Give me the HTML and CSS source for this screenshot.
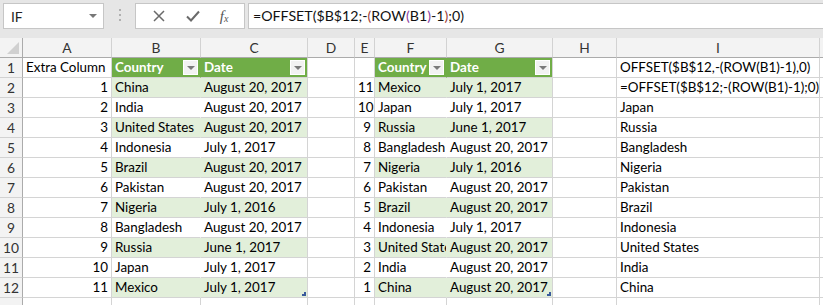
FILE: index.html
```html
<!DOCTYPE html>
<html>
<head>
<meta charset="utf-8">
<link rel="stylesheet" href="styles.css">
</head>
<body>
<div class="fbar">
  <div class="namebox"><span class="nb-text">IF</span><span class="nb-arrow"></span></div>
  <div class="grip"><i></i><i></i><i></i></div>
  <div class="iconbox">
    <svg class="ic" width="14" height="14" viewBox="0 0 14 14"><path d="M2 2L12 12M12 2L2 12" stroke="#6a6a6a" stroke-width="1.5" fill="none"/></svg>
    <svg class="ic" width="16" height="14" viewBox="0 0 16 14"><path d="M2 7.5L6 11.5L14 2.5" stroke="#6a6a6a" stroke-width="2" fill="none"/></svg>
    <span class="fx">f<sub>x</sub></span>
  </div>
  <div class="formula">=OFFSET($B$12;-<span class="p2">(</span>ROW<span class="p3">(</span>B1<span class="p3">)</span>-1<span class="p2">)</span>;0)</div>
</div>
<div class="sheet">
  <div class="corner"><span class="tri"></span></div>
  <div class="ch">A</div><div class="ch">B</div><div class="ch">C</div><div class="ch">D</div><div class="ch">E</div><div class="ch">F</div><div class="ch">G</div><div class="ch">H</div><div class="ch">I</div><div class="ch"></div>

  <div class="rh">1</div>
  <div class="c">Extra Column</div>
  <div class="c th">Country<span class="dd"></span></div>
  <div class="c th thl">Date<span class="dd"></span></div>
  <div class="c"></div><div class="c"></div>
  <div class="c th">Country<span class="dd"></span></div>
  <div class="c th thl">Date<span class="dd"></span></div>
  <div class="c"></div>
  <div class="c">OFFSET($B$12,-(ROW(B1)-1),0)</div><div class="c"></div>

  <div class="rh">2</div>
  <div class="c r">1</div><div class="c g">China</div><div class="c g end">August 20, 2017</div>
  <div class="c"></div><div class="c r">11</div><div class="c g">Mexico</div><div class="c g end">July 1, 2017</div>
  <div class="c"></div><div class="c">=OFFSET($B$12;-(ROW(B1)-1);0)</div><div class="c"></div>

  <div class="rh">3</div>
  <div class="c r">2</div><div class="c w">India</div><div class="c w end">August 20, 2017</div>
  <div class="c"></div><div class="c r">10</div><div class="c w">Japan</div><div class="c w end">July 1, 2017</div>
  <div class="c"></div><div class="c">Japan</div><div class="c"></div>

  <div class="rh">4</div>
  <div class="c r">3</div><div class="c g">United States</div><div class="c g end">August 20, 2017</div>
  <div class="c"></div><div class="c r">9</div><div class="c g">Russia</div><div class="c g end">June 1, 2017</div>
  <div class="c"></div><div class="c">Russia</div><div class="c"></div>

  <div class="rh">5</div>
  <div class="c r">4</div><div class="c w">Indonesia</div><div class="c w end">July 1, 2017</div>
  <div class="c"></div><div class="c r">8</div><div class="c w">Bangladesh</div><div class="c w end">August 20, 2017</div>
  <div class="c"></div><div class="c">Bangladesh</div><div class="c"></div>

  <div class="rh">6</div>
  <div class="c r">5</div><div class="c g">Brazil</div><div class="c g end">August 20, 2017</div>
  <div class="c"></div><div class="c r">7</div><div class="c g">Nigeria</div><div class="c g end">July 1, 2016</div>
  <div class="c"></div><div class="c">Nigeria</div><div class="c"></div>

  <div class="rh">7</div>
  <div class="c r">6</div><div class="c w">Pakistan</div><div class="c w end">August 20, 2017</div>
  <div class="c"></div><div class="c r">6</div><div class="c w">Pakistan</div><div class="c w end">August 20, 2017</div>
  <div class="c"></div><div class="c">Pakistan</div><div class="c"></div>

  <div class="rh">8</div>
  <div class="c r">7</div><div class="c g">Nigeria</div><div class="c g end">July 1, 2016</div>
  <div class="c"></div><div class="c r">5</div><div class="c g">Brazil</div><div class="c g end">August 20, 2017</div>
  <div class="c"></div><div class="c">Brazil</div><div class="c"></div>

  <div class="rh">9</div>
  <div class="c r">8</div><div class="c w">Bangladesh</div><div class="c w end">August 20, 2017</div>
  <div class="c"></div><div class="c r">4</div><div class="c w">Indonesia</div><div class="c w end">July 1, 2017</div>
  <div class="c"></div><div class="c">Indonesia</div><div class="c"></div>

  <div class="rh">10</div>
  <div class="c r">9</div><div class="c g">Russia</div><div class="c g end">June 1, 2017</div>
  <div class="c"></div><div class="c r">3</div><div class="c g">United States</div><div class="c g end">August 20, 2017</div>
  <div class="c"></div><div class="c">United States</div><div class="c"></div>

  <div class="rh">11</div>
  <div class="c r">10</div><div class="c w">Japan</div><div class="c w end">July 1, 2017</div>
  <div class="c"></div><div class="c r">2</div><div class="c w">India</div><div class="c w end">August 20, 2017</div>
  <div class="c"></div><div class="c">India</div><div class="c"></div>

  <div class="rh">12</div>
  <div class="c r">11</div><div class="c g">Mexico</div><div class="c g end">July 1, 2017<span class="handle"></span></div>
  <div class="c"></div><div class="c r">1</div><div class="c g">China</div><div class="c g end">August 20, 2017<span class="handle"></span></div>
  <div class="c"></div><div class="c">China</div><div class="c"></div>

  <div class="rh"></div>
  <div class="c"></div><div class="c"></div><div class="c"></div><div class="c"></div><div class="c"></div><div class="c"></div><div class="c"></div><div class="c"></div><div class="c"></div><div class="c"></div>
</div>
</body>
</html>
```
FILE: styles.css
```css
html, body {
  margin: 0;
  padding: 0;
}
body {
  width: 823px;
  height: 305px;
  overflow: hidden;
  background: #ffffff;
  font-family: Lato, "Open Sans", sans-serif;
  font-size: 13.4px;
  color: #000;
}
.fbar {
  height: 38px;
  background: #e6e6e6;
  display: flex;
  align-items: flex-start;
  padding-top: 3px;
  box-sizing: border-box;
}
.namebox {
  margin-left: 3px;
  width: 101px;
  height: 26px;
  box-sizing: border-box;
  background: #fff;
  border: 1px solid #c6c6c6;
  display: flex;
  align-items: center;
  justify-content: space-between;
  padding: 0 6px 0 7px;
}
.nb-text {
  font-size: 13.8px;
  color: #222;
}
.nb-arrow {
  width: 0;
  height: 0;
  border-left: 4px solid transparent;
  border-right: 4px solid transparent;
  border-top: 4px solid #777;
}
.grip {
  width: 31px;
  display: flex;
  flex-direction: column;
  align-items: center;
  gap: 3px;
  padding-top: 6px;
}
.grip i {
  display: block;
  width: 2px;
  height: 2px;
  background: #b0b0b0;
}
.iconbox {
  width: 110px;
  height: 26px;
  box-sizing: border-box;
  background: #fff;
  border: 1px solid #c6c6c6;
  display: flex;
  align-items: center;
  justify-content: space-around;
  padding: 0 6px;
}
.fx {
  font-family: "Liberation Serif", serif;
  font-style: italic;
  font-size: 15px;
  color: #555;
}
.fx sub {
  font-size: 10px;
  vertical-align: -1px;
}
.formula {
  margin-left: 3px;
  flex: 1;
  height: 26px;
  box-sizing: border-box;
  background: #fff;
  border: 1px solid #c6c6c6;
  border-right: none;
  padding: 3px 0 0 4px;
  font-size: 14.2px;
  color: #111;
  white-space: nowrap;
}
.p2 { color: #a0413a; }
.p3 { color: #8a3d9e; }

.sheet {
  display: grid;
  grid-template-columns: 23px 89px 89px 107px 47px 20px 72px 106px 64px 203px 20px;
  grid-template-rows: 20px repeat(13, 20px);
}
.corner, .ch, .rh {
  background: #f3f3f3;
  box-sizing: border-box;
  border-right: 1px solid #d2d2d2;
  border-bottom: 1px solid #d2d2d2;
  color: #333;
  font-size: 13.8px;
}
.corner {
  position: relative;
  border-bottom-color: #ababab;
  border-right-color: #ababab;
}
.tri {
  position: absolute;
  right: 3px;
  bottom: 3px;
  width: 0;
  height: 0;
  border-left: 12px solid transparent;
  border-bottom: 12px solid #d0d0d0;
}
.ch {
  text-align: center;
  line-height: 19px;
  border-bottom-color: #ababab;
}
.rh {
  text-align: center;
  line-height: 20px;
  border-right-color: #ababab;
}
.c {
  box-sizing: border-box;
  border-right: 1px solid #d4d4d4;
  border-bottom: 1px solid #d4d4d4;
  padding: 0 3px;
  line-height: 19px;
  white-space: nowrap;
  overflow: hidden;
  position: relative;
}
.r {
  text-align: right;
}
.th {
  background: #70ad47;
  color: #fff;
  font-weight: bold;
  border-right-color: #70ad47;
  border-bottom-color: #d4d4d4;
}
.thl {
  border-right-color: #d4d4d4;
}
.dd {
  position: absolute;
  right: 2px;
  top: 2px;
  width: 15px;
  height: 15px;
  box-sizing: border-box;
  background: #f2f2f2;
  border: 1px solid #ffffff;
}
.dd::after {
  content: "";
  position: absolute;
  left: 3px;
  top: 5px;
  border-left: 4px solid transparent;
  border-right: 4px solid transparent;
  border-top: 4px solid #7a7a7a;
}
.g {
  background: #e2efda;
  border-right-color: #e2efda;
}
.w {
  background: #fff;
  border-right-color: #fff;
}
.end {
  border-right-color: #d4d4d4;
}
.handle {
  position: absolute;
  right: 1px;
  bottom: 1px;
  width: 4px;
  height: 4px;
  border-right: 2px solid #3a5a9c;
  border-bottom: 2px solid #3a5a9c;
  box-sizing: border-box;
}
```
